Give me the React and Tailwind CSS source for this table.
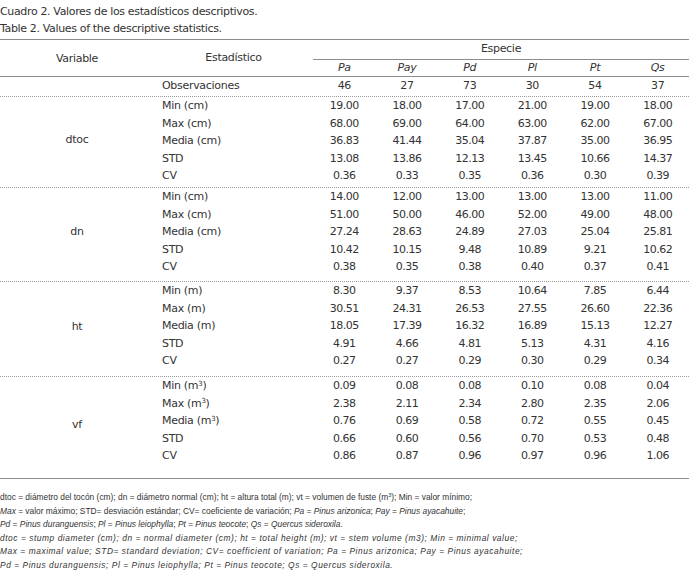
const species = ["Pa", "Pay", "Pd", "Pl", "Pt", "Qs"];
const obs = ["46", "27", "73", "30", "54", "37"];

const sections = [
  {
    name: "dtoc",
    h: "h-[91px]",
    rows: [
      ["Min (cm)", "19.00", "18.00", "17.00", "21.00", "19.00", "18.00"],
      ["Max (cm)", "68.00", "69.00", "64.00", "63.00", "62.00", "67.00"],
      ["Media (cm)", "36.83", "41.44", "35.04", "37.87", "35.00", "36.95"],
      ["STD", "13.08", "13.86", "12.13", "13.45", "10.66", "14.37"],
      ["CV", "0.36", "0.33", "0.35", "0.36", "0.30", "0.39"],
    ],
  },
  {
    name: "dn",
    h: "h-[94px]",
    rows: [
      ["Min (cm)", "14.00", "12.00", "13.00", "13.00", "13.00", "11.00"],
      ["Max (cm)", "51.00", "50.00", "46.00", "52.00", "49.00", "48.00"],
      ["Media (cm)", "27.24", "28.63", "24.89", "27.03", "25.04", "25.81"],
      ["STD", "10.42", "10.15", "9.48", "10.89", "9.21", "10.62"],
      ["CV", "0.38", "0.35", "0.38", "0.40", "0.37", "0.41"],
    ],
  },
  {
    name: "ht",
    h: "h-[95px]",
    rows: [
      ["Min (m)", "8.30", "9.37", "8.53", "10.64", "7.85", "6.44"],
      ["Max (m)", "30.51", "24.31", "26.53", "27.55", "26.60", "22.36"],
      ["Media (m)", "18.05", "17.39", "16.32", "16.89", "15.13", "12.27"],
      ["STD", "4.91", "4.66", "4.81", "5.13", "4.31", "4.16"],
      ["CV", "0.27", "0.27", "0.29", "0.30", "0.29", "0.34"],
    ],
  },
  {
    name: "vf",
    h: "h-[102px]",
    sup: true,
    rows: [
      ["Min", "0.09", "0.08", "0.08", "0.10", "0.08", "0.04"],
      ["Max", "2.38", "2.11", "2.34", "2.80", "2.35", "2.06"],
      ["Media", "0.76", "0.69", "0.58", "0.72", "0.55", "0.45"],
      ["STD", "0.66", "0.60", "0.56", "0.70", "0.53", "0.48"],
      ["CV", "0.86", "0.87", "0.96", "0.97", "0.96", "1.06"],
    ],
  },
];

const Label = ({ text, sup }) => {
  if (sup && text !== "STD" && text !== "CV") {
    return (
      <span>
        {text} (m<sup className="text-[7px]">3</sup>)
      </span>
    );
  }
  return <span>{text}</span>;
};

const Section = ({ s, last }) => (
  <div
    className={`flex ${s.h} ${
      last ? "border-b border-[#8c8c8c]" : "border-b border-dotted border-[#9a9a9a]"
    }`}
  >
    <div className="w-[154px] flex items-center justify-center pb-[4px]">{s.name}</div>
    <div className="flex-1 flex flex-col pt-[1px]">
      {s.rows.map((r) => (
        <div key={r[0]} className="flex h-[17.4px] items-center">
          <div className="w-[159px] pl-[8px]">
            <Label text={r[0]} sup={s.sup} />
          </div>
          <div className="flex-1 grid grid-cols-6 tracking-[-0.5px]">
            {r.slice(1).map((v, i) => (
              <div key={i} className="text-center">
                {v}
              </div>
            ))}
          </div>
        </div>
      ))}
    </div>
  </div>
);

export default function App() {
  return (
    <div
      className="w-[689px] h-[571px] bg-white text-[#333333] overflow-hidden"
      style={{ fontFamily: '"DejaVu Sans", sans-serif' }}
    >
      <div className="text-[11px] leading-[17px] pt-[3px] tracking-[-0.35px]">
        <div>Cuadro 2. Valores de los estadísticos descriptivos.</div>
        <div>Table 2. Values of the descriptive statistics.</div>
      </div>

      <div className="mt-[2px] text-[11px] tracking-[-0.3px]">
        {/* header */}
        <div className="flex h-[38px] border-t border-b border-[#8c8c8c]">
          <div className="w-[154px] flex items-center justify-center pt-[3px]">Variable</div>
          <div className="w-[159px] flex items-center justify-center pt-[1px]">Estadístico</div>
          <div className="flex-1 flex flex-col">
            <div className="h-[20px] flex items-center justify-center border-b border-[#8c8c8c]">
              Especie
            </div>
            <div className="flex-1 grid grid-cols-6 items-center italic">
              {species.map((s) => (
                <div key={s} className="text-center">
                  {s}
                </div>
              ))}
            </div>
          </div>
        </div>

        {/* observaciones */}
        <div className="flex h-[20px] items-center border-b border-dotted border-[#9a9a9a]">
          <div className="w-[154px]" />
          <div className="w-[159px] pl-[8px]">Observaciones</div>
          <div className="flex-1 grid grid-cols-6">
            {obs.map((v, i) => (
              <div key={i} className="text-center">
                {v}
              </div>
            ))}
          </div>
        </div>

        {sections.map((s, i) => (
          <Section key={s.name} s={s} last={i === sections.length - 1} />
        ))}
      </div>

      <div
        className="mt-[12px] text-[8.4px] leading-[13.6px]"
        style={{ fontFamily: '"Liberation Sans", sans-serif' }}
      >
        <div>
          dtoc = diámetro del tocón (cm); dn = diámetro normal (cm); ht = altura total (m); vt = volumen de fuste (m
          <sup className="text-[5.5px]">3</sup>); Min = valor mínimo;
        </div>
        <div>
          <i>Max</i> = valor máximo; STD= desviación estándar; CV= coeficiente de variación; <i>Pa</i> ={" "}
          <i>Pinus arizonica</i>; <i>Pay</i> = <i>Pinus ayacahuite</i>;
        </div>
        <div>
          <i>Pd</i> = <i>Pinus duranguensis</i>; <i>Pl</i> = <i>Pinus leiophylla</i>; <i>Pt</i> ={" "}
          <i>Pinus teocote</i>; <i>Qs</i> = <i>Quercus sideroxila</i>.
        </div>
        <div className="italic tracking-[0.55px]">
          dtoc = stump diameter (cm); dn = normal diameter (cm); ht = total height (m); vt = stem volume (m3); Min =
          minimal value;
        </div>
        <div className="italic tracking-[0.55px]">
          Max = maximal value; STD= standard deviation; CV= coefficient of variation; Pa = Pinus arizonica; Pay =
          Pinus ayacahuite;
        </div>
        <div className="italic tracking-[0.55px]">
          Pd = Pinus duranguensis; Pl = Pinus leiophylla; Pt = Pinus teocote; Qs = Quercus sideroxila.
        </div>
      </div>
    </div>
  );
}
